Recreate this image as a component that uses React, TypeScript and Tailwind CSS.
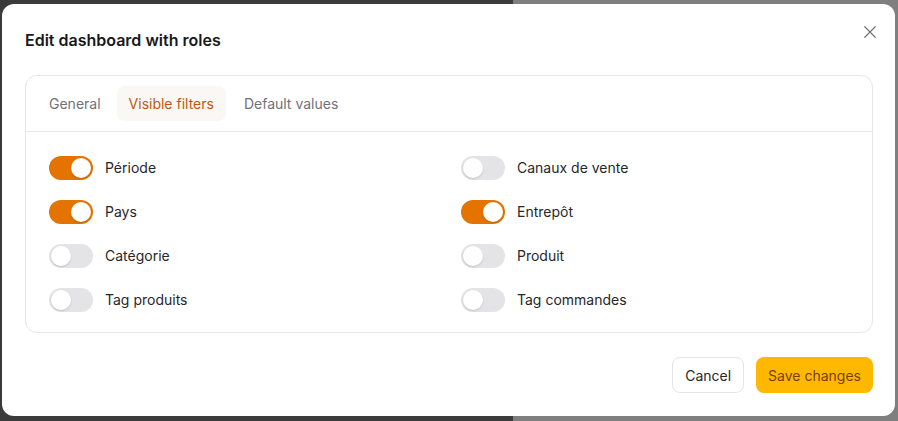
import React from "react";

const Toggle = ({ on }: { on: boolean }) => (
  <div
    className={
      "flex h-6 w-11 shrink-0 items-center rounded-full p-[2px] " +
      (on ? "justify-end bg-[#e57300]" : "justify-start bg-[#e4e4e7]")
    }
  >
    <div className="h-5 w-5 rounded-full bg-white shadow-[0_1px_2px_rgba(0,0,0,0.15)]" />
  </div>
);

const left: [string, boolean][] = [
  ["Période", true],
  ["Pays", true],
  ["Catégorie", false],
  ["Tag produits", false],
];
const right: [string, boolean][] = [
  ["Canaux de vente", false],
  ["Entrepôt", true],
  ["Produit", false],
  ["Tag commandes", false],
];

const Col = ({ items }: { items: [string, boolean][] }) => (
  <div className="flex flex-col gap-5">
    {items.map(([label, on]) => (
      <div key={label} className="flex items-center gap-3">
        <Toggle on={on} />
        <span className="text-[14px] leading-6 text-[#27272a]">{label}</span>
      </div>
    ))}
  </div>
);

export default function App() {
  return (
    <div
      className="relative h-[421px] w-[898px] overflow-hidden"
      style={{ fontFamily: "Inter, 'Noto Sans', sans-serif" }}
    >
      <div className="flex h-full w-full">
        <div className="h-full w-[513px] bg-[#3b3b3b]" />
        <div className="h-full flex-1 bg-[#7f7f7f]" />
      </div>
      <div className="absolute left-[2px] top-[4px] flex h-[412px] w-[893px] flex-col rounded-xl bg-white pb-[23px] pl-[23px] pr-[22px] pt-6">
        <div className="flex h-6 items-center justify-between">
          <h2 className="text-[16px] font-semibold leading-6 text-[#18181b]">
            Edit dashboard with roles
          </h2>
          <button className="mr-[-6px] mt-[-16px] text-[#71717a]">
            <svg width="18" height="18" viewBox="0 0 24 24" fill="none" stroke="currentColor" strokeWidth="1.6" strokeLinecap="round">
              <path d="M5 5l14 14M19 5L5 19" />
            </svg>
          </button>
        </div>
        <div className="mt-[23px] flex h-[258px] flex-col rounded-xl border border-[#e7e7e9]">
          <div className="flex h-[57px] items-start gap-1 border-b border-[#e7e7e9] px-[11px] pt-[10px]">
            <div className="flex h-[35px] items-center rounded-lg px-3 text-[14px] text-[#71717a]">General</div>
            <div className="flex h-[35px] items-center rounded-lg bg-[#faf8f5] px-3 text-[14px] text-[#c2570c]">Visible filters</div>
            <div className="ml-[2px] flex h-[35px] items-center rounded-lg px-3 text-[14px] text-[#71717a]">Default values</div>
          </div>
          <div className="grid grid-cols-2 gap-6 pb-5 pl-[23px] pr-[23px] pt-6">
            <Col items={left} />
            <Col items={right} />
          </div>
        </div>
        <div className="mt-6 flex justify-end gap-3">
          <button className="h-9 rounded-lg border border-[#e4e4e7] bg-white px-3 text-[14px] text-[#27272a]">
            Cancel
          </button>
          <button className="h-9 rounded-lg bg-[#ffb800] px-3 text-[14px] text-[#7a3e00]">
            Save changes
          </button>
        </div>
      </div>
    </div>
  );
}
